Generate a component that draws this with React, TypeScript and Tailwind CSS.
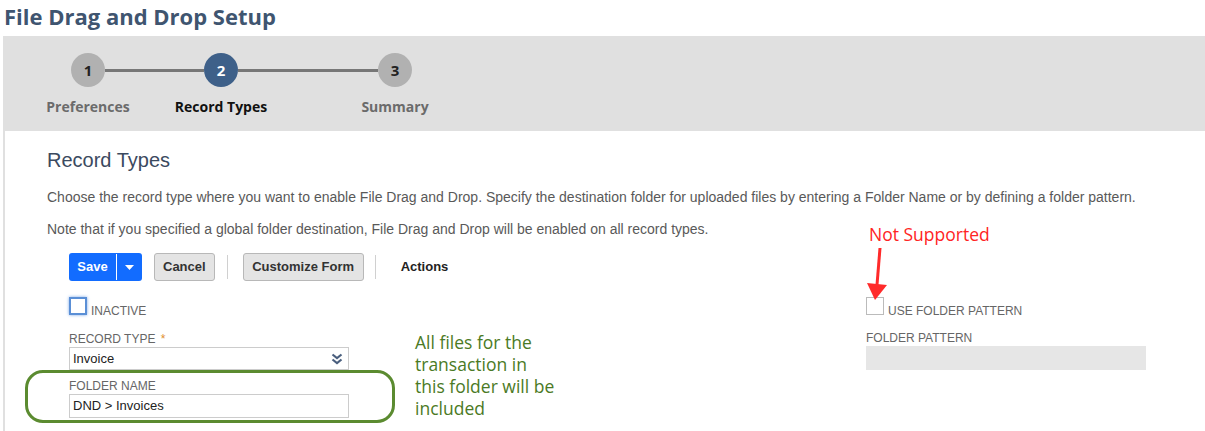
import React from "react";

const arial = { fontFamily: '"Liberation Sans", Arial, sans-serif' };

function Step({ n, active }: { n: number; active?: boolean }) {
  return (
    <div
      className={`flex h-[34px] w-[34px] flex-none items-center justify-center rounded-full text-[15px] font-bold ${
        active ? "bg-[#3e6089] text-white" : "bg-[#b1b1b1] text-[#222]"
      }`}
    >
      {n}
    </div>
  );
}

function Btn({ children }: { children: React.ReactNode }) {
  return (
    <div className="flex h-[28px] items-center rounded-[3px] border border-[#b8b8b8] bg-[#e4e4e4] px-[8px] text-[13px] font-bold text-[#333]">
      {children}
    </div>
  );
}

export default function App() {
  return (
    <div
      className="relative h-[431px] w-[1205px] overflow-hidden bg-white"
      style={{ fontFamily: '"Open Sans", sans-serif' }}
    >
      <div className="h-[36px] pl-[4px] text-[22px] font-bold leading-[32px] text-[#3f5570]">
        File Drag and Drop Setup
      </div>
      <div className="ml-[3px] h-[395px] border-l-2 border-[#e0e0e0]">
        {/* stepper panel */}
        <div className="h-[95px] bg-[#e0e0e0] pt-[17px]">
          <div className="flex items-center pl-[66px]">
            <Step n={1} />
            <div className="h-[3px] w-[99px] bg-[#777]" />
            <Step n={2} active />
            <div className="h-[3px] w-[140px] bg-[#777]" />
            <Step n={3} />
          </div>
          <div className="mt-[10px] flex text-[14px] font-bold leading-[20px]">
            <div className="ml-[23px] w-[120px] text-center text-[#6b6b6b]">Preferences</div>
            <div className="ml-[13px] w-[120px] text-center text-[#111]">Record Types</div>
            <div className="ml-[54px] w-[120px] text-center text-[#6b6b6b]">Summary</div>
          </div>
        </div>

        {/* content */}
        <div className="pl-[42px]" style={arial}>
          <div className="mt-[17px] text-[20px] leading-[24px] text-[#3b4a60]">Record Types</div>
          <div className="mt-[17px] text-[14px] leading-[16px] text-[#595959]">
            Choose the record type where you want to enable File Drag and Drop. Specify the destination folder for uploaded files by entering a Folder Name or by defining a folder pattern.
          </div>
          <div className="mt-[16px] text-[14px] leading-[16px] text-[#595959]">
            Note that if you specified a global folder destination, File Drag and Drop will be enabled on all record types.
          </div>

          {/* buttons */}
          <div className="mt-[16px] flex items-center pl-[22px]">
            <div className="flex h-[28px] overflow-hidden rounded-[3px] bg-[#126cff] text-white">
              <div className="flex w-[47px] items-center justify-center text-[13px] font-bold">Save</div>
              <div className="my-[1px] w-px bg-white" />
              <div className="flex w-[25px] items-center justify-center">
                <svg width="9" height="5" viewBox="0 0 9 5">
                  <path d="M0 0h9L4.5 5z" fill="white" />
                </svg>
              </div>
            </div>
            <div className="ml-[12px]">
              <Btn>Cancel</Btn>
            </div>
            <div className="ml-[12px] mr-[15px] h-[24px] w-px bg-[#d0d0d0]" />
            <div className="w-[121px]">
              <Btn>
                <span className="w-full text-center">Customize Form</span>
              </Btn>
            </div>
            <div className="mx-[11px] h-[24px] w-px bg-[#d0d0d0]" />
            <div className="ml-[14px] text-[13px] font-bold text-[#222]">Actions</div>
          </div>

          {/* form */}
          <div className="mt-[16px] flex pl-[22px]">
            <div className="w-[280px]">
              <div className="flex items-end">
                <div className="h-[18px] w-[18px] border-2 border-[#5a8fd6] bg-white shadow-[0_0_3px_#7aa7e6]" />
                <div className="-mb-[3px] ml-[4px] text-[12px] leading-[14px] text-[#666]">INACTIVE</div>
              </div>
              <div className="mt-[17px] text-[12px] leading-[14px] text-[#666]">
                RECORD TYPE <span className="ml-[2px] text-[#e0902e]">*</span>
              </div>
              <div className="mt-[1px] flex h-[23px] items-center justify-between border border-[#ccc] pl-[3px] pr-[5px] text-[13px] text-[#222]">
                <span>Invoice</span>
                <svg width="12" height="12" viewBox="0 0 12 12">
                  <path d="M1.5 1.5L6 5l4.5-3.5M1.5 6.5L6 10l4.5-3.5" stroke="#4a5f7e" strokeWidth="2.2" fill="none" />
                </svg>
              </div>
              <div className="relative pt-[9px]">
                <div className="text-[12px] leading-[14px] text-[#666]">FOLDER NAME</div>
                <div className="mt-[1px] flex h-[24px] items-center border border-[#ccc] pl-[3px] text-[13px] text-[#222]">
                  DND &gt; Invoices
                </div>
                <div className="absolute -left-[44px] top-0 h-[53px] w-[370px] rounded-[18px] border-[3px] border-[#5b8b30]" />
              </div>
            </div>

            <div
              className="ml-[66px] mt-[34px] w-[170px] text-[17.5px] leading-[22px] text-[#4b7a25]"
              style={{ fontFamily: '"Open Sans", sans-serif' }}
            >
              All files for the
              <br />
              transaction in
              <br />
              this folder will be
              <br />
              included
            </div>

            <div className="relative ml-[281px] w-[280px]">
              <div
                className="absolute -top-[74px] left-[3px] text-[17.5px] leading-[22px] text-[#ff2424]"
                style={{ fontFamily: '"Open Sans", sans-serif' }}
              >
                Not Supported
              </div>
              <svg className="absolute -top-[50px] left-0" width="24" height="54" viewBox="0 0 24 54">
                <path d="M14 1L11 38" stroke="#ff2a2a" strokeWidth="3" />
                <path d="M1 36L21 38L9 53z" fill="#ff2a2a" />
              </svg>
              <div className="flex items-end">
                <div className="h-[18px] w-[18px] border border-[#bbb] bg-white" />
                <div className="-mb-[3px] ml-[4px] text-[12px] leading-[14px] text-[#666]">USE FOLDER PATTERN</div>
              </div>
              <div className="mt-[16px] text-[12px] leading-[14px] text-[#666]">FOLDER PATTERN</div>
              <div className="mt-[1px] h-[24px] bg-[#e6e6e6]" />
            </div>
          </div>
        </div>
      </div>
    </div>
  );
}
